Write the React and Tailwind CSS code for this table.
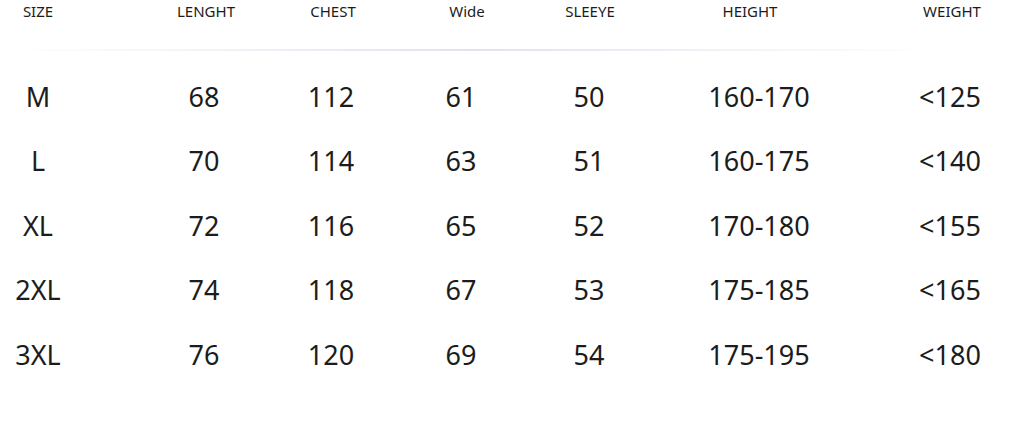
const header = [
  { label: 'SIZE', w: 'w-[76px]', ml: '' },
  { label: 'LENGHT', w: 'w-[100px]', ml: 'ml-[80px]' },
  { label: 'CHEST', w: 'w-[100px]', ml: 'ml-[27px]' },
  { label: 'Wide', w: 'w-[100px]', ml: 'ml-[34px]' },
  { label: 'SLEEYE', w: 'w-[100px]', ml: 'ml-[23px]' },
  { label: 'HEIGHT', w: 'w-[100px]', ml: 'ml-[60px]' },
  { label: 'WEIGHT', w: 'w-[100px]', ml: 'ml-[102px]' },
];

const rows = [
  ['M', '68', '112', '61', '50', '160-170', '<125'],
  ['L', '70', '114', '63', '51', '160-175', '<140'],
  ['XL', '72', '116', '65', '52', '170-180', '<155'],
  ['2XL', '74', '118', '67', '53', '175-185', '<165'],
  ['3XL', '76', '120', '69', '54', '175-195', '<180'],
];

// body columns sit a little off the header ones in the picture
const bodyCols = [
  { w: 'w-[76px]', ml: '' },
  { w: 'w-[100px]', ml: 'ml-[78px]' },
  { w: 'w-[100px]', ml: 'ml-[27px]' },
  { w: 'w-[100px]', ml: 'ml-[30px]' },
  { w: 'w-[100px]', ml: 'ml-[28px]' },
  { w: 'w-[120px]', ml: 'ml-[60px]' },
  { w: 'w-[100px]', ml: 'ml-[81px]' },
];

export default function App() {
  return (
    <div
      className="w-[1024px] h-[447px] bg-white text-[#1c1c1c] overflow-hidden"
      style={{ fontFamily: '"Noto Sans", "Open Sans", sans-serif' }}
    >
      <div className="flex h-[22px] items-center text-[15px] leading-none">
        {header.map((h) => (
          <div key={h.label} className={`${h.w} ${h.ml} text-center shrink-0`}>
            {h.label}
          </div>
        ))}
      </div>

      <div className="mt-[27px] ml-[10px] h-[2px] w-[925px] bg-gradient-to-r from-white via-[#e2e2f0] to-white" />

      <div className="mt-[13px] flex flex-col">
        {rows.map((r) => (
          <div key={r[0]} className="flex h-[64.5px] items-center text-[27px] leading-none">
            {r.map((cell, i) => (
              <div
                key={i}
                className={`${bodyCols[i].w} ${bodyCols[i].ml} text-center shrink-0`}
              >
                {cell}
              </div>
            ))}
          </div>
        ))}
      </div>
    </div>
  );
}
